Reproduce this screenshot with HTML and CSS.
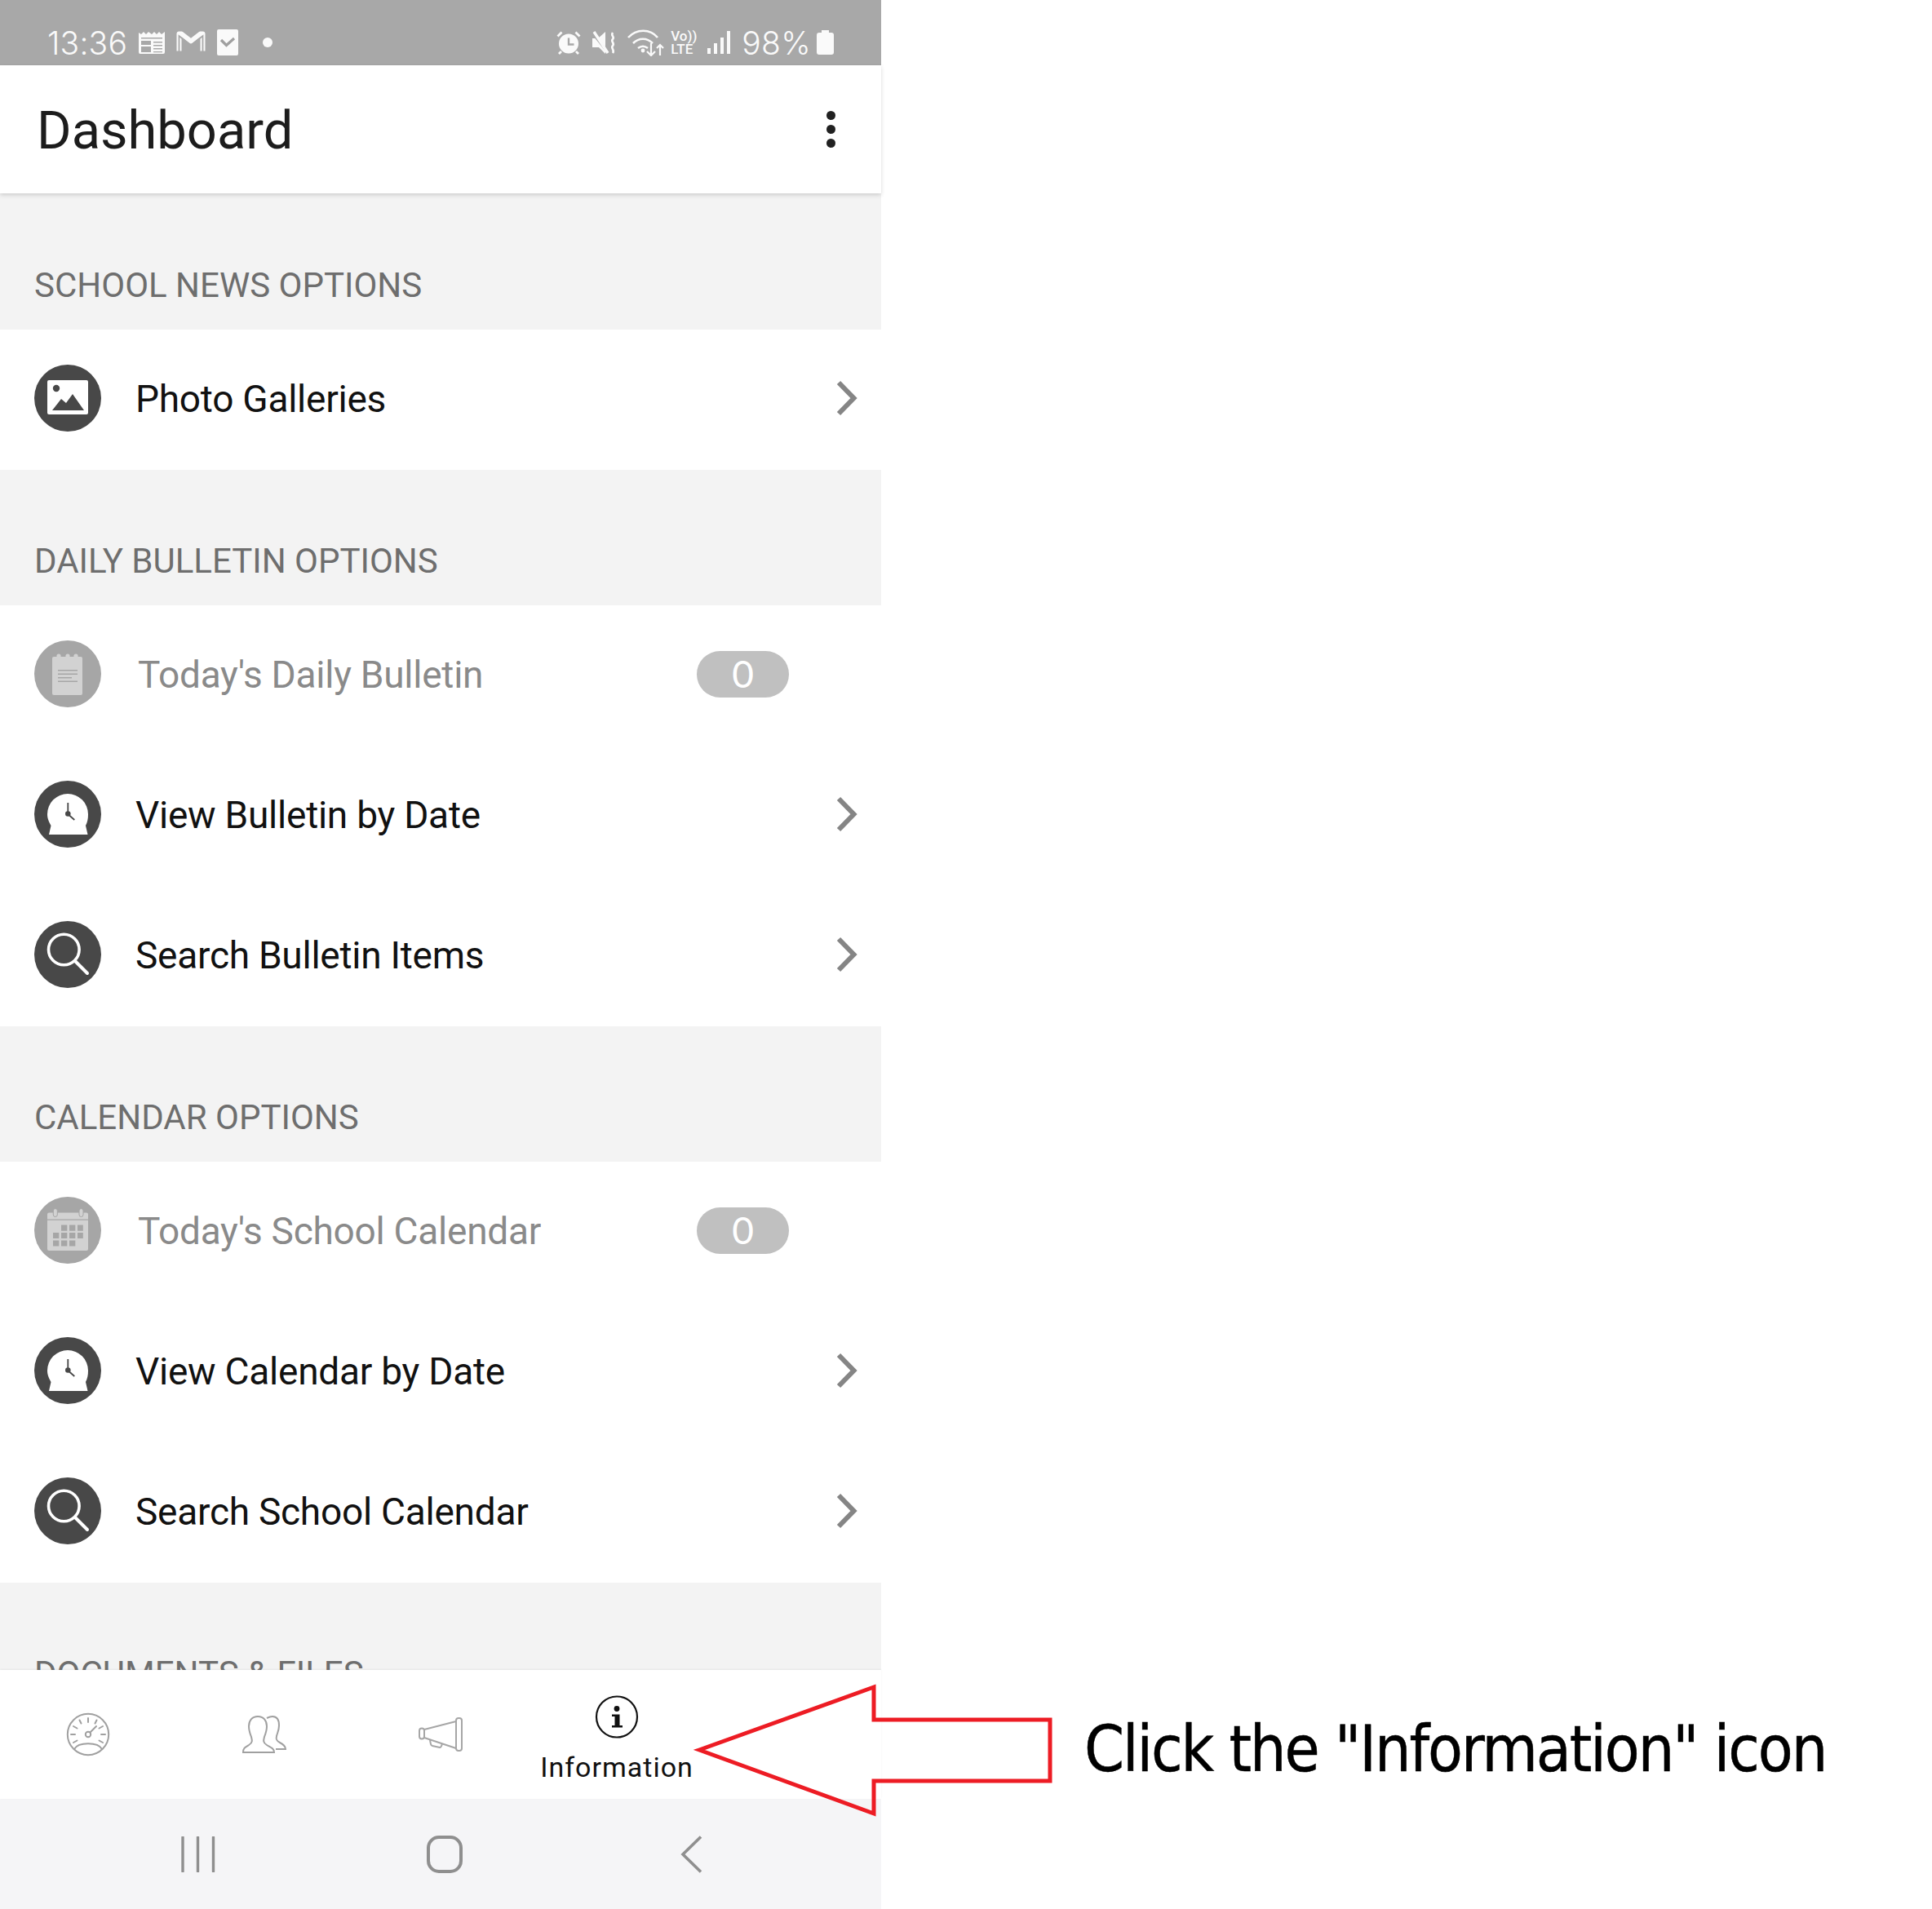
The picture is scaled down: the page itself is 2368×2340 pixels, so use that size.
FILE: index.html
```html
<!DOCTYPE html>
<html lang="en">
<head>
<meta charset="utf-8">
<title>Dashboard</title>
<link rel="stylesheet" href="styles.css">
</head>
<body>
<svg class="defs" width="0" height="0">
  <defs>
    <g id="clock"><path d="M16 41a25 25 0 0 1 50 0c0 6-1 10-3 14l2.500 11H18l2.500-11c-2-4-4.500-8-4.500-14z" fill="#fff"/><path d="M41.300 27v14l8 7" fill="none" stroke="#484848" stroke-width="1.800"/><circle cx="41.300" cy="40.500" r="3.300" fill="#484848"/></g>
    <g id="lens"><circle cx="36.300" cy="35" r="18.800" fill="none" stroke="#fff" stroke-width="3.600"/><path d="M50 49l15 15" stroke="#fff" stroke-width="4" stroke-linecap="round"/></g>
    <path id="chevron" d="M3 3l18.500 19L3 41" fill="none" stroke="#858585" stroke-width="6"/>
  </defs>
</svg>
<div class="page">
  <main class="phone">
    <header class="status">
      <div class="status-left">
        <span class="clock">13:36</span>
        <svg class="si cal" width="32" height="29" viewBox="0 0 32 29"><path d="M0 2l3 2 3-3 3 3 3-3 4 3 3-3 3 3 3-3 3 3 4-3v25q0 2-2 2H2q-2 0-2-2z" fill="#fafafa"/><path d="M3 8h26v1.500H3z" fill="#a8a8a8"/><path d="M3 12h12v5H3zM3 19h12v7H3z" fill="#a8a8a8"/><path d="M18 13h11v1.500H18zM18 17h11v1.500H18zM18 21h11v1.500H18zM18 25h11v1.300H18z" fill="#a8a8a8"/></svg>
        <svg class="si m" width="36" height="28" viewBox="0 0 36 28"><path d="M3.500 24.500V3.500h3L18 12.500 29.500 3.500h3v21" fill="none" stroke="#fafafa" stroke-width="6" stroke-linejoin="round"/><path d="M3.500 25.500V6L18 17.500 32.500 6v19.500" fill="none" stroke="#a8a8a8" stroke-width="1.800"/></svg>
        <svg class="si chk" width="26" height="32" viewBox="0 0 26 32"><rect width="26" height="32" rx="2" fill="#fafafa"/><path d="M5 13l6.500 6.500L21 11" fill="none" stroke="#a0a0a0" stroke-width="3.200"/></svg>
        <span class="dot"></span>
      </div>
      <div class="status-right">
        <svg class="si" width="30" height="29" viewBox="0 0 30 29"><circle cx="15" cy="15.500" r="12" fill="#fafafa"/><path d="M15 8.500v8h6.500" fill="none" stroke="#a8a8a8" stroke-width="2.400"/><path d="M1.500 6.500l5-5M28.500 6.500l-5-5M6 25l-3 3M24 25l3 3" stroke="#fafafa" stroke-width="2.800"/></svg>
        <svg class="si" width="29" height="29" viewBox="0 0 29 29"><path d="M0 9h7l9-8v27l-8-8H0z" fill="#fafafa"/><path d="M-1 1l20 25" stroke="#a8a8a8" stroke-width="3"/><path d="M2 1l17 26" stroke="#fafafa" stroke-width="3.400"/><path d="M25 2c-3 4 3 5 0 8-3 3 3 5 0 8-3 3 3 5 0 9" fill="none" stroke="#fafafa" stroke-width="2.600"/></svg>
        <svg class="si" width="45" height="33" viewBox="0 0 45 33"><path d="M1 10c10-11 27-11 36 0M7 17c7-7 17-7 24 0M13 23c4-3 8-3 12 0" fill="none" stroke="#fafafa" stroke-width="2.600"/><circle cx="19" cy="26" r="2.400" fill="#fafafa"/><path d="M29 17v15m-5-5l5 5 5-5M40 32V19m-4 4l4-4 4 4" fill="none" stroke="#fafafa" stroke-width="2.200"/></svg>
        <span class="lte"><span>Vo))</span><span>LTE</span></span>
        <svg class="si" width="28" height="28" viewBox="0 0 28 28"><path d="M0 21h4v7H0zM8 15h4v13H8zM16 8h4v20h-4zM24 0h4v28h-4z" fill="#fafafa"/></svg>
        <span class="batt-text">98%</span>
        <svg class="si batt" width="21" height="30" viewBox="0 0 21 30"><path d="M6 0h9v3h3q3 0 3 3v21q0 3-3 3H3q-3 0-3-3V6q0-3 3-3h3z" fill="#fafafa"/></svg>
      </div>
    </header>

    <header class="appbar">
      <h1 class="title">Dashboard</h1>
      <div class="kebab"><i></i><i></i><i></i></div>
    </header>

    <div class="scroll">
      <h2 class="section">SCHOOL NEWS OPTIONS</h2>
      <a class="row">
        <span class="badge-icon"><svg width="82" height="82" viewBox="0 0 82 82"><path d="M18 19h46q2 0 2 2v38q0 2-2 2H18q-2 0-2-2V21q0-2 2-2z" fill="#fff"/><circle cx="27" cy="29" r="4.200" fill="#484848"/><path d="M22 56l11-14 6 5 8-11 14 20z" fill="#484848"/></svg></span>
        <span class="label">Photo Galleries</span>
        <svg class="chev" width="26" height="44" viewBox="0 0 26 44"><use href="#chevron"/></svg>
      </a>

      <h2 class="section">DAILY BULLETIN OPTIONS</h2>
      <a class="row off">
        <span class="badge-icon"><svg width="82" height="82" viewBox="0 0 82 82"><path d="M24 20h33q2 0 2 2v43q0 2-2 2H24q-2 0-2-2V22q0-2 2-2z" fill="#d2d2d2"/><circle cx="30" cy="19" r="2.600" fill="#d2d2d2"/><circle cx="41" cy="19" r="2.600" fill="#d2d2d2"/><circle cx="51" cy="19" r="2.600" fill="#d2d2d2"/><path d="M29 36h24v1.400H29zM29 40.500h24v1.400H29zM29 45h17v1.400H29zM29 49.500h24v1.400H29z" fill="#a6a6a6"/></svg></span>
        <span class="label shifted">Today's Daily Bulletin</span>
        <span class="pill">0</span>
      </a>
      <a class="row">
        <span class="badge-icon"><svg width="82" height="82" viewBox="0 0 82 82"><use href="#clock"/></svg></span>
        <span class="label">View Bulletin by Date</span>
        <svg class="chev" width="26" height="44" viewBox="0 0 26 44"><use href="#chevron"/></svg>
      </a>
      <a class="row">
        <span class="badge-icon"><svg width="82" height="82" viewBox="0 0 82 82"><use href="#lens"/></svg></span>
        <span class="label">Search Bulletin Items</span>
        <svg class="chev" width="26" height="44" viewBox="0 0 26 44"><use href="#chevron"/></svg>
      </a>

      <h2 class="section">CALENDAR OPTIONS</h2>
      <a class="row off">
        <span class="badge-icon"><svg width="82" height="82" viewBox="0 0 82 82"><path d="M18 19.500h46q2 0 2 2V64q0 2-2 2H18q-2 0-2-2V21.500q0-2 2-2z" fill="#d2d2d2"/><rect x="23.300" y="14.500" width="5" height="10" rx="2.500" fill="#d2d2d2" stroke="#a6a6a6" stroke-width="1"/><rect x="55" y="14.500" width="5" height="10" rx="2.500" fill="#d2d2d2" stroke="#a6a6a6" stroke-width="1"/><path d="M16 27.500h50v1.200H16z" fill="#a6a6a6"/><path d="M33 34.500h7.300v7.200H33zM43 34.500h7.300v7.200H43zM53 34.500h6.800v7.200H53zM23 44h7.300v7H23zM33 44h7.300v7H33zM43 44h7.300v7H43zM53 44h6.800v7H53zM23 53.500h7.300v7H23zM33 53.500h7.300v7H33zM43 53.500h7.300v7H43z" fill="#a6a6a6"/></svg></span>
        <span class="label shifted">Today's School Calendar</span>
        <span class="pill">0</span>
      </a>
      <a class="row">
        <span class="badge-icon"><svg width="82" height="82" viewBox="0 0 82 82"><use href="#clock"/></svg></span>
        <span class="label">View Calendar by Date</span>
        <svg class="chev" width="26" height="44" viewBox="0 0 26 44"><use href="#chevron"/></svg>
      </a>
      <a class="row">
        <span class="badge-icon"><svg width="82" height="82" viewBox="0 0 82 82"><use href="#lens"/></svg></span>
        <span class="label">Search School Calendar</span>
        <svg class="chev" width="26" height="44" viewBox="0 0 26 44"><use href="#chevron"/></svg>
      </a>

      <h2 class="section">DOCUMENTS &amp; FILES</h2>
    </div>

    <nav class="tabs">
      <div class="tab">
        <svg width="56" height="56" viewBox="0 0 56 56" fill="none" stroke="#a0a0a0" stroke-width="2"><circle cx="28" cy="28" r="25.200"/><path d="M11 46c5-9 29-9 34 0"/><circle cx="28" cy="28" r="3.200"/><path d="M30.500 25.500L38 18M28 8v5M17.500 10.500l2 4M38.500 10.500l-2 4M10 18l4.500 2.500M46 18l-4.500 2.500M7 28h5M44 28h5M10 38l4.500-2.500M46 38l-4.500-2.500" stroke-linecap="round"/></svg>
      </div>
      <div class="tab">
        <svg width="56" height="48" viewBox="0 0 56 48" fill="none" stroke="#a0a0a0" stroke-width="2"><path d="M2 46c0-5 2-6 7-9 5-3 4-6 3-10-2-5-3-8-3-13C9 7 13 2 20 2s11 5 11 12c0 5-1 8-3 13-1 4-2 7 3 10 5 3 9 4 9 9z"/><path d="M31 4c2-1 4-2 7-2 6 0 8 5 8 11 0 6-2 9-3 13-1 4 0 6 4 8 4 2 7 4 7 8H42"/></svg>
      </div>
      <div class="tab">
        <svg width="54" height="42" viewBox="-1 -1 54 42" fill="none" stroke="#a6a6a6" stroke-width="2"><rect x="45" y="0" width="7" height="40" rx="3"/><path d="M6 14L45 4M6 24l39 13"/><rect x="0" y="12.500" width="6" height="13" rx="3"/><path d="M13 27l1 5q0 1 2 2l9 2q2 0 3-5"/></svg>
      </div>
      <div class="tab active">
        <svg width="54" height="54" viewBox="0 0 54 54"><circle cx="27" cy="26.500" r="25" fill="none" stroke="#111" stroke-width="2.200"/><circle cx="27" cy="16.500" r="3.400" fill="#111"/><path d="M21 23.500h9.500V37H34v2.500H21V37h3.500V26H21z" fill="#111"/></svg>
        <span class="tab-label">Information</span>
      </div>
    </nav>

    <footer class="sysnav">
      <svg width="42" height="44" viewBox="0 0 42 44"><path d="M2 1v42M20.500 1v42M39.500 1v42" stroke="#8f8f8f" stroke-width="3.400" stroke-linecap="round"/></svg>
      <svg width="46" height="46" viewBox="0 0 46 46"><rect x="3" y="2" width="40" height="42" rx="13" fill="none" stroke="#8f8f8f" stroke-width="4"/></svg>
      <svg class="back" width="28" height="46" viewBox="0 0 28 46"><path d="M25 1.500L3 23l22 21.500" fill="none" stroke="#8f8f8f" stroke-width="3.600"/></svg>
    </footer>
  </main>

  <aside class="note">Click the "Information" icon</aside>
</div>

<svg class="arrow" width="446" height="170" viewBox="0 0 446 170"><path d="M7 85L221 8v40h216v75H221v40z" fill="none" stroke="#ed1c24" stroke-width="5"/></svg>
</body>
</html>
```

FILE: styles.css
```css
* { box-sizing: border-box; }
html, body { margin: 0; padding: 0; background: #fff; }
body { position: relative; width: 2368px; height: 2340px; overflow: hidden; font-family: Roboto, "Liberation Sans", sans-serif; }

.page { display: flex; height: 2340px; }
.phone { width: 1080px; height: 2340px; display: flex; flex-direction: column; background: #fff; flex: none; }

.status { height: 80px; flex: none; background: #a8a8a8; display: flex; justify-content: space-between; align-items: center; padding: 24px 58px 0 58px; color: #fafafa; }
.status-left, .status-right { display: flex; align-items: center; }
.status-left { gap: 14px; }
.status-right { gap: 14px; }
.clock { font-family: Inter, sans-serif; font-size: 39px; font-weight: 300; letter-spacing: .2px; }
.dot { width: 12px; height: 12px; border-radius: 50%; background: #fafafa; margin-left: 16px; }
.si { display: block; flex: none; }
.lte { display: flex; flex-direction: column; font-size: 17px; line-height: 16px; font-weight: 500; margin-left: -6px; align-items: flex-start; width: 31px; white-space: nowrap; }
.batt-text { font-family: Inter, sans-serif; font-size: 39px; font-weight: 300; letter-spacing: .3px; }
.batt { margin-left: -7px; }

.appbar { height: 157px; flex: none; display: flex; align-items: center; justify-content: space-between; padding: 0 56px 0 45px; background: #fff; box-shadow: 0 2px 5px rgba(0,0,0,.16); position: relative; z-index: 1; }
.title { margin: 2px 0 0; font-size: 65px; font-weight: 400; color: #1c1c1c; }
.kebab { display: flex; flex-direction: column; gap: 6px; }
.kebab i { display: block; width: 11px; height: 11px; border-radius: 50%; background: #212121; }

.scroll { flex: 1; min-height: 0; overflow: hidden; background: #f3f3f3; }
.section { margin: 0; height: 166px; padding: 87px 0 0 42px; font-size: 42px; line-height: 50px; font-weight: 400; color: #6e6e6e; background: #f3f3f3; }
.section:first-child { height: 167px; padding-top: 88px; }
.row { height: 172px; display: flex; align-items: center; padding: 0 29px 5px 42px; background: #fff; color: #111; }
.badge-icon { width: 82px; height: 82px; flex: none; border-radius: 50%; background: #484848; display: block; }
.badge-icon svg { display: block; }
.off .badge-icon { background: #a6a6a6; }
.label { margin: 3px 0 0 42px; font-size: 46px; letter-spacing: -.25px; flex: 1; }
.shifted { margin-left: 45px; color: #8a8a8a; }
.chev { flex: none; margin-top: 1px; }
.pill { width: 113px; height: 57px; border-radius: 29px; background: #c0c0c0; color: #fff; font-family: Lato, sans-serif; font-size: 46px; line-height: 56px; text-align: center; margin: 2px 84px 0 0; flex: none; }

.tabs { height: 158px; flex: none; display: flex; background: #fff; box-shadow: 0 -1px 2px rgba(0,0,0,.06); position: relative; }
.tab { width: 216px; display: flex; flex-direction: column; align-items: center; justify-content: center; }
.tab.active { justify-content: flex-start; padding-top: 31px; }
.tab-label { font-size: 34px; line-height: 40px; margin-top: 14px; color: #111; letter-spacing: 1px; white-space: nowrap; }

.sysnav { height: 135px; flex: none; background: #f5f5f7; display: flex; align-items: center; gap: 258px; padding: 0 0 0 222px; }
.back { margin-left: 8px; }

.note { margin: 2099px 0 0 249px; font-family: "DejaVu Sans", sans-serif; font-stretch: condensed; font-size: 78px; letter-spacing: -2px; line-height: 90px; color: #000; -webkit-text-stroke: .5px #000; white-space: nowrap; }

.arrow { position: absolute; left: 850px; top: 2060px; }
.defs { position: absolute; }
```
